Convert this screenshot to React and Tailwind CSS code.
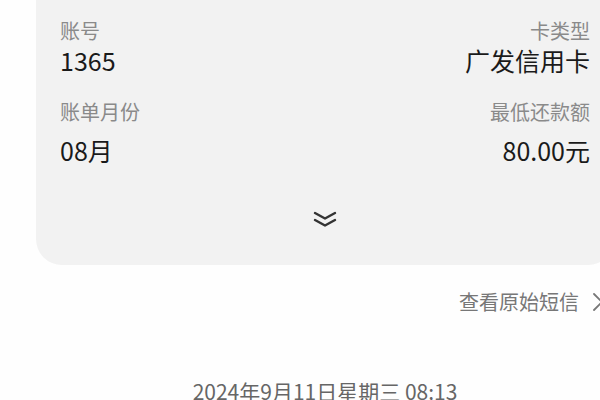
export default function App() {
  const font = { fontFamily: '"Noto Sans CJK SC", "Noto Sans", sans-serif' };
  return (
    <div className="w-[600px] h-[400px] overflow-hidden bg-[#fefefe]" style={font}>
      <div className="ml-[36px] w-[578px]">
        <div className="-mt-[30px] pt-[49px] pb-[33px] px-[24px] bg-[#f2f2f2] rounded-[26px]">
          <div className="flex justify-between">
            <div className="flex flex-col">
              <span className="text-[20px] leading-[24px] text-[#8a8a8a]">账号</span>
              <span className="mt-[1px] text-[25px] leading-[32px] text-[#1a1a1a]">1365</span>
              <span className="mt-[24px] text-[20px] leading-[24px] text-[#8a8a8a]">账单月份</span>
              <span className="mt-[10px] text-[25px] leading-[32px] text-[#1a1a1a]">08月</span>
            </div>
            <div className="flex flex-col items-end">
              <span className="text-[20px] leading-[24px] text-[#8a8a8a]">卡类型</span>
              <span className="mt-[1px] text-[25px] leading-[32px] text-[#1a1a1a]">广发信用卡</span>
              <span className="mt-[24px] text-[20px] leading-[24px] text-[#8a8a8a]">最低还款额</span>
              <span className="mt-[10px] text-[25px] leading-[32px] text-[#1a1a1a]">80.00元</span>
            </div>
          </div>
          <div className="mt-[42px] flex justify-center">
            <svg width="26" height="24" viewBox="0 0 26 24" fill="none" stroke="#333" strokeWidth="2.4" strokeLinecap="round" strokeLinejoin="round">
              <polyline points="3,5 13,10.5 23,5" />
              <polyline points="3,12 13,17.5 23,12" />
            </svg>
          </div>
        </div>
        <div className="mt-[23px] flex justify-end items-center pr-[10px]">
          <span className="text-[20px] leading-[28px] text-[#777]">查看原始短信</span>
          <svg className="ml-[13px]" width="12" height="20" viewBox="0 0 12 20" fill="none" stroke="#777" strokeWidth="1.8" strokeLinecap="round" strokeLinejoin="round">
            <polyline points="2,2 10,10 2,18" />
          </svg>
        </div>
        <div className="mt-[62px] flex justify-center">
          <span className="text-[21px] leading-[26px] text-[#666]">2024年9月11日星期三 08:13</span>
        </div>
      </div>
    </div>
  );
}
